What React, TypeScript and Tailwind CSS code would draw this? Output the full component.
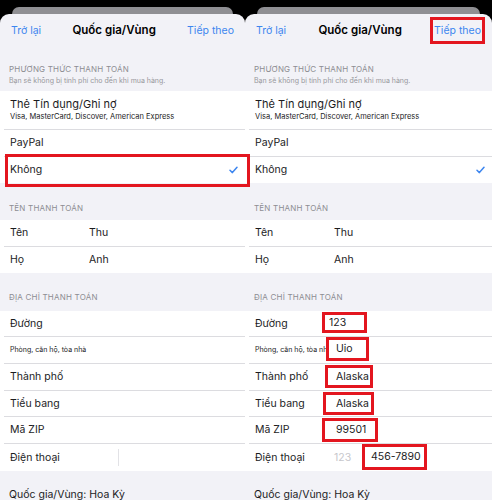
import React from "react";

type Row = { label: string; value?: string; small?: boolean; h: string };

const nameRows: Row[] = [
  { label: "Tên", value: "Thu", h: "h-[27px]" },
  { label: "Họ", value: "Anh", h: "h-[26px]" },
];

const addressRows: Row[] = [
  { label: "Đường", h: "h-[26px]" },
  { label: "Phòng, căn hộ, tòa nhà", small: true, h: "h-[27px]" },
  { label: "Thành phố", h: "h-[27px]" },
  { label: "Tiểu bang", h: "h-[26px]" },
  { label: "Mã ZIP", h: "h-[27px]" },
];

const CheckMark = () => (
  <svg width="9" height="8" viewBox="0 0 9 8" fill="none">
    <path d="M1 4.3 L3.4 6.6 L8 1.2" stroke="#3d86ef" strokeWidth="1.5" strokeLinecap="round" strokeLinejoin="round" />
  </svg>
);

const SectionHeader = ({ title, className }: { title: string; className: string }) => (
  <div className={`px-[9px] text-[8px] leading-[11px] tracking-[0.2px] text-[#8d8d92] ${className}`}>{title}</div>
);

const Panel = ({ width, phonePlaceholder }: { width: string; phonePlaceholder?: boolean }) => (
  <div className={`${width} flex flex-col`}>
    {/* stacked sheet behind */}
    <div className="h-[14px] pt-[7px] px-[12px]">
      <div className="h-[7px] rounded-t-[7px] bg-[#8f8f93]" />
    </div>

    <div className="flex-1 rounded-t-[9px] bg-[#f2f2f7] text-[#1c1c1e]">
      {/* nav bar */}
      <div className="h-[34px] px-[11px] flex items-center justify-between text-[10.5px]">
        <span className="text-[#3d86ef]">Trở lại</span>
        <span className="font-semibold text-[11.5px] text-black">Quốc gia/Vùng</span>
        <span className="text-[#3d86ef]">Tiếp theo</span>
      </div>

      {/* payment method */}
      <div className="pt-[16px] pb-[4px]">
        <SectionHeader title="PHƯƠNG THỨC THANH TOÁN" className="" />
        <div className="px-[9px] text-[7px] leading-[12px] text-[#98989d]">
          Bạn sẽ không bị tính phí cho đến khi mua hàng.
        </div>
      </div>
      <div className="bg-white">
        <div className="h-[39px] ml-[4px] pl-[6px] flex flex-col justify-center border-b border-[#dcdce0]">
          <span className="text-[11px] leading-[14px]">Thẻ Tín dụng/Ghi nợ</span>
          <span className="text-[7.5px] leading-[12px]">Visa, MasterCard, Discover, American Express</span>
        </div>
        <div className="h-[27px] ml-[4px] pl-[6px] flex items-center text-[10.5px] border-b border-[#dcdce0]">
          PayPal
        </div>
        <div className="h-[26px] ml-[4px] pl-[6px] pr-[7px] flex items-center justify-between text-[10.5px]">
          Không
          <CheckMark />
        </div>
      </div>

      {/* billing name */}
      <SectionHeader title="TÊN THANH TOÁN" className="pt-[20px] pb-[6px]" />
      <div className="bg-white">
        {nameRows.map((r, i) => (
          <div
            key={r.label}
            className={`${r.h} ml-[4px] pl-[6px] grid grid-cols-[79px_1fr] items-center text-[10.5px] ${
              i < nameRows.length - 1 ? "border-b border-[#dcdce0]" : ""
            }`}
          >
            <span>{r.label}</span>
            <span>{r.value}</span>
          </div>
        ))}
      </div>

      {/* billing address */}
      <SectionHeader title="ĐỊA CHỈ THANH TOÁN" className="pt-[19px] pb-[8px]" />
      <div className="bg-white">
        {addressRows.map((r) => (
          <div
            key={r.label}
            className={`${r.h} ml-[4px] pl-[6px] flex items-center border-b border-[#dcdce0] whitespace-nowrap ${
              r.small ? "text-[7px]" : "text-[10.5px]"
            }`}
          >
            {r.label}
          </div>
        ))}
        <div className="h-[27px] ml-[4px] pl-[6px] flex items-center text-[10.5px]">
          <span className="w-[79px]">Điện thoại</span>
          <span className="w-[29px] text-[#c7c7cc]">{phonePlaceholder ? "123" : ""}</span>
          <span className="h-[17px] w-px bg-[#e2e2e6]" />
        </div>
      </div>

      <div className="pt-[16px] px-[9px] text-[10.5px]">Quốc gia/Vùng: Hoa Kỳ</div>
    </div>
  </div>
);

// red annotation boxes drawn over the screenshots
const marks = [
  { cls: "left-[5px] top-[154px] w-[245px] h-[33px]", text: "" },
  { cls: "left-[430px] top-[17px] w-[55px] h-[27px]", text: "" },
  { cls: "left-[322px] top-[312px] w-[45px] h-[21px] bg-white pl-[4px]", text: "123" },
  { cls: "left-[326px] top-[337px] w-[43px] h-[24px] bg-white pl-[7px]", text: "Uio" },
  { cls: "left-[325px] top-[365px] w-[48px] h-[23px] bg-white pl-[8px]", text: "Alaska" },
  { cls: "left-[323px] top-[392px] w-[51px] h-[23px] bg-white pl-[10px]", text: "Alaska" },
  { cls: "left-[322px] top-[418px] w-[56px] h-[24px] bg-white pl-[11px]", text: "99501" },
  { cls: "left-[362px] top-[444px] w-[65px] h-[26px] bg-white pl-[6px]", text: "456-7890" },
];

export default function App() {
  return (
    <div className="relative w-[492px] h-[500px] overflow-hidden bg-black font-['Inter',sans-serif] flex">
      <Panel width="w-[245px]" />
      <Panel width="w-[247px]" phonePlaceholder />
      {marks.map((m, i) => (
        <div
          key={i}
          className={`absolute ${m.cls} border-[3px] border-[#e3161f] flex items-center text-[10.5px] text-[#1c1c1e]`}
        >
          {m.text}
        </div>
      ))}
    </div>
  );
}
